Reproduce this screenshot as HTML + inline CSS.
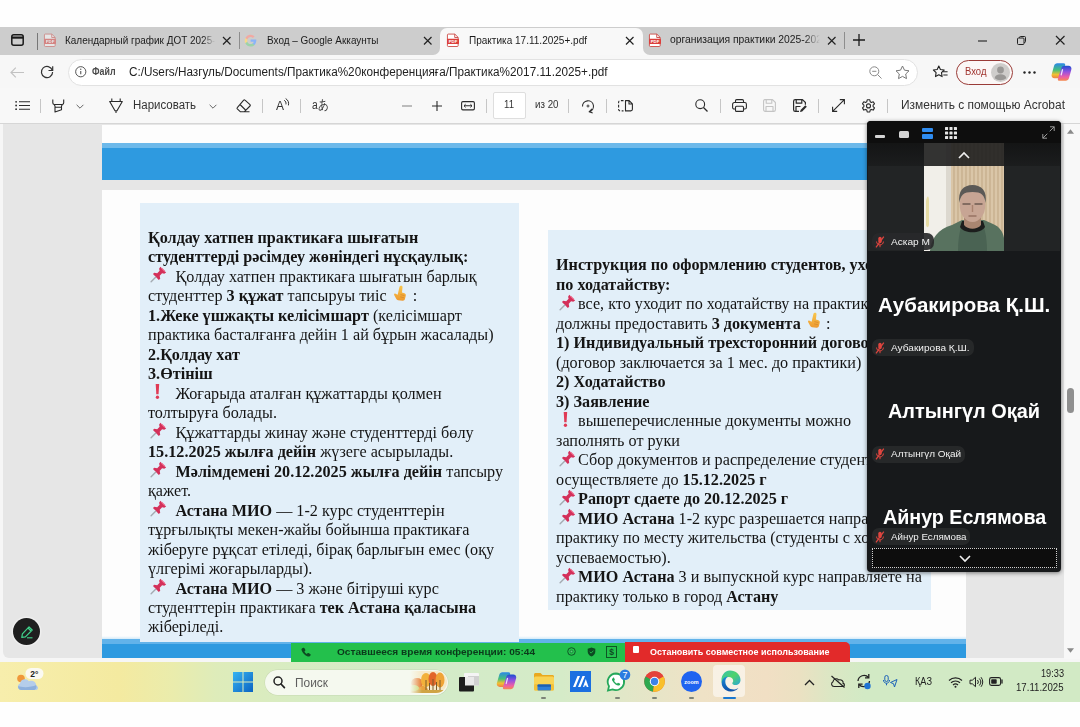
<!DOCTYPE html>
<html lang="ru"><head><meta charset="utf-8"><title>Практика 17.11.2025+.pdf</title>
<style>
*{box-sizing:border-box;margin:0;padding:0}
html,body{width:1080px;height:727px;overflow:hidden;background:#fefefe}
body{position:relative;font-family:"Liberation Sans",sans-serif;color:#1b1b1b}
.abs{position:absolute}
.t{position:absolute;white-space:pre;transform-origin:0 50%;display:block}
svg{position:absolute;overflow:visible}
.sep{position:absolute;width:1px;background:#c6c6c6}
#tabbar{left:0;top:26.500px;width:1080px;height:28px;background:#cdcdcd}
#acttab{left:440px;top:27.500px;width:203px;height:27px;background:#f8f8f8;border-radius:7px 7px 0 0}
#addr{left:0;top:54.500px;width:1080px;height:33.500px;background:#f7f7f7}
#pill{left:68px;top:58.500px;width:850px;height:27.500px;background:#fff;border:1px solid #e2e2e2;border-radius:14px}
#tool{left:0;top:88px;width:1080px;height:36px;background:#f8f8f8;border-bottom:1.200px solid #d6d6d6}
#viewer{left:0;top:122px;width:1080px;height:539px;background:#e6e6e6;overflow:hidden}
.ser{font-family:"Liberation Serif",serif;color:#141414}
#lbox{left:140px;top:203px;width:379px;height:438.700px;background:#e2eff9}
#rbox{left:548px;top:230px;width:383px;height:380px;background:#e2eff9}
.ln{height:19.45px;white-space:nowrap;position:relative}
.ln>span{display:inline-block;transform-origin:0 50%;white-space:pre}
.eb{position:relative;display:inline-block;height:1px;vertical-align:baseline}
.eb svg{position:absolute}
</style></head><body>

<div id="tabbar" class="abs"></div>
<div id="acttab" class="abs"></div>
<svg style="left:433px;top:47.500px;width:7px;height:7px" viewBox="0 0 7 7"><path d="M7 0v7H0A7 7 0 0 0 7 0z" fill="#f8f8f8"/></svg>
<svg style="left:643px;top:47.500px;width:7px;height:7px" viewBox="0 0 7 7"><path d="M0 0v7h7A7 7 0 0 1 0 0z" fill="#f8f8f8"/></svg>
<svg style="left:11px;top:33.8px;width:12px;height:12px;" viewBox="0 0 12 12"><rect x=".8" y=".8" width="11.4" height="10.4" rx="2" fill="none" stroke="#1a1a1a" stroke-width="1.5"/><path d="M.8 3.6h11.4" stroke="#1a1a1a" stroke-width="2.2"/></svg>
<div class="sep" style="left:37px;top:32.5px;height:17.5px;background:#777"></div>
<svg style="left:43.5px;top:32.75px;width:12px;height:14.5px;opacity:0.5" viewBox="0 0 14 16"><path d="M1.5 .8h7.6l3.9 3.9v9.6a1 1 0 0 1-1 1H1.5a1 1 0 0 1-1-1V1.8a1 1 0 0 1 1-1z" fill="#fff" stroke="#c9403c" stroke-width="1"/><path d="M9 .8v4h4" fill="none" stroke="#c9403c" stroke-width="1"/><rect x="0" y="6.2" width="14" height="6.2" rx=".8" fill="#dc3e3a"/><text x="7" y="11.2" font-family="Liberation Sans,sans-serif" font-size="5" font-weight="bold" fill="#fff" text-anchor="middle">PDF</text></svg>
<div class="abs" style="left:65px;top:30px;width:150px;height:20px;overflow:hidden;-webkit-mask-image:linear-gradient(90deg,#000 92%,transparent);mask-image:linear-gradient(90deg,#000 92%,transparent)"><span class="t" style="left:0px;top:3.61px;font-size:10.66px;line-height:12.79px;font-weight:normal;color:#1b1b1b;transform:scaleX(0.9347);">Календарный график ДОТ 2025-</span></div>
<svg style="left:222.75px;top:36.75px;width:7.5px;height:7.5px;" viewBox="0 0 7.5 7.5"><path d="M0 0L7.5 7.5M7.5 0L0 7.5" stroke="#222" stroke-width="1.2" fill="none"/></svg>
<div class="sep" style="left:239px;top:32px;height:17px;background:#8d8d8d"></div>
<svg style="left:244px;top:33.5px;width:13px;height:13px;" viewBox="0 0 13 13"><path d="M12.3 6.6c0-.4 0-.8-.1-1.2H6.6v2.3h3.2a2.8 2.8 0 0 1-1.2 1.8v1.5h1.9c1.1-1 1.8-2.6 1.8-4.4z" fill="#8ab4f8"/><path d="M6.6 12.5c1.6 0 3-.5 3.9-1.500l-1.900-1.500c-.5.400-1.200.600-2 .600-1.500 0-2.800-1-3.300-2.400H1.400v1.500a5.900 5.900 0 0 0 5.200 3.300z" fill="#9cd3a8"/><path d="M3.300 7.700a3.500 3.500 0 0 1 0-2.300V3.900H1.400a5.900 5.900 0 0 0 0 5.300z" fill="#f7d98a"/><path d="M6.600 3c.9 0 1.700.300 2.300.900l1.700-1.700A5.900 5.900 0 0 0 1.400 3.900l1.900 1.500C3.800 4 5.100 3 6.600 3z" fill="#f1a9a3"/></svg>
<span class="t" style="left:266.5px;top:33.62px;font-size:10.64px;line-height:12.77px;font-weight:normal;color:#1b1b1b;transform:scaleX(0.9357);">Вход – Google Аккаунты</span>
<svg style="left:424.25px;top:36.75px;width:7.5px;height:7.5px;" viewBox="0 0 7.5 7.5"><path d="M0 0L7.5 7.5M7.5 0L0 7.5" stroke="#222" stroke-width="1.2" fill="none"/></svg>
<svg style="left:447px;top:32.75px;width:12px;height:14.5px;opacity:1" viewBox="0 0 14 16"><path d="M1.5 .8h7.6l3.9 3.9v9.6a1 1 0 0 1-1 1H1.5a1 1 0 0 1-1-1V1.8a1 1 0 0 1 1-1z" fill="#fff" stroke="#c9403c" stroke-width="1"/><path d="M9 .8v4h4" fill="none" stroke="#c9403c" stroke-width="1"/><rect x="0" y="6.2" width="14" height="6.2" rx=".8" fill="#dc3e3a"/><text x="7" y="11.2" font-family="Liberation Sans,sans-serif" font-size="5" font-weight="bold" fill="#fff" text-anchor="middle">PDF</text></svg>
<span class="t" style="left:469px;top:33.57px;font-size:10.72px;line-height:12.86px;font-weight:normal;color:#1b1b1b;transform:scaleX(0.9351);">Практика 17.11.2025+.pdf</span>
<svg style="left:625.75px;top:36.75px;width:7.5px;height:7.5px;" viewBox="0 0 7.5 7.5"><path d="M0 0L7.5 7.5M7.5 0L0 7.5" stroke="#222" stroke-width="1.2" fill="none"/></svg>
<svg style="left:648.5px;top:32.75px;width:12px;height:14.5px;opacity:1" viewBox="0 0 14 16"><path d="M1.5 .8h7.6l3.9 3.9v9.6a1 1 0 0 1-1 1H1.5a1 1 0 0 1-1-1V1.8a1 1 0 0 1 1-1z" fill="#fff" stroke="#c9403c" stroke-width="1"/><path d="M9 .8v4h4" fill="none" stroke="#c9403c" stroke-width="1"/><rect x="0" y="6.2" width="14" height="6.2" rx=".8" fill="#dc3e3a"/><text x="7" y="11.2" font-family="Liberation Sans,sans-serif" font-size="5" font-weight="bold" fill="#fff" text-anchor="middle">PDF</text></svg>
<div class="abs" style="left:670px;top:30px;width:150px;height:20px;overflow:hidden;-webkit-mask-image:linear-gradient(90deg,#000 90%,transparent);mask-image:linear-gradient(90deg,#000 90%,transparent)"><span class="t" style="left:0px;top:3.4px;font-size:11px;line-height:13.2px;font-weight:normal;color:#1b1b1b;transform:scaleX(0.9395);">организация практики 2025-202</span></div>
<svg style="left:827.75px;top:36.75px;width:7.5px;height:7.5px;" viewBox="0 0 7.5 7.5"><path d="M0 0L7.5 7.5M7.5 0L0 7.5" stroke="#222" stroke-width="1.2" fill="none"/></svg>
<div class="sep" style="left:844px;top:32px;height:17px;background:#8d8d8d"></div>
<svg style="left:853px;top:34px;width:12px;height:12px;" viewBox="0 0 12 12"><path d="M6 0v12M0 6h12" stroke="#1a1a1a" stroke-width="1.3"/></svg>
<svg style="left:977.5px;top:40px;width:9px;height:2px;" viewBox="0 0 9 2"><path d="M0 1h9" stroke="#222" stroke-width="1.1"/></svg>
<svg style="left:1016.5px;top:36px;width:9px;height:9px;" viewBox="0 0 9 9"><rect x=".5" y="2" width="6.500" height="6.500" rx="1" fill="none" stroke="#222" stroke-width="1"/><path d="M2.500 2V1.500a1 1 0 0 1 1-1H7.500a1 1 0 0 1 1 1V5.500a1 1 0 0 1-1 1H7" fill="none" stroke="#222" stroke-width="1"/></svg>
<svg style="left:1055.75px;top:36.25px;width:8.5px;height:8.5px;" viewBox="0 0 8.5 8.5"><path d="M0 0L8.5 8.5M8.5 0L0 8.5" stroke="#222" stroke-width="1.2" fill="none"/></svg>
<div id="addr" class="abs"></div>
<svg style="left:9.5px;top:66.5px;width:14px;height:11px;" viewBox="0 0 14 11"><path d="M14 5.500H1M5.800 .7L1 5.500l4.800 4.800" stroke="#c2c2c2" stroke-width="1.2" fill="none"/></svg>
<svg style="left:40px;top:65px;width:14px;height:14px;" viewBox="0 0 14 14"><path d="M12.300 5.200A5.600 5.600 0 1 0 12.600 7" stroke="#333" stroke-width="1.200" fill="none"/><path d="M12.700 1.300v4.200H8.500" stroke="#333" stroke-width="1.200" fill="none"/></svg>
<div id="pill" class="abs"></div>
<svg style="left:74.75px;top:66.25px;width:11.5px;height:11.5px;" viewBox="0 0 11.5 11.5"><circle cx="5.750" cy="5.750" r="5.100" stroke="#555" stroke-width="1" fill="none"/><path d="M5.750 5v3.300" stroke="#555" stroke-width="1.100"/><circle cx="5.750" cy="3.300" r=".7" fill="#555"/></svg>
<span class="t" style="left:92px;top:65.88px;font-size:10.2px;line-height:12.24px;font-weight:bold;color:#4a4a4a;transform:scaleX(0.8669);">Файл</span>
<span class="t" style="left:128.5px;top:64.5px;font-size:12.5px;line-height:15px;font-weight:normal;color:#222;transform:scaleX(0.9397);">C:/Users/Назгуль/Documents/Практика%20конференцияға/Практика%2017.11.2025+.pdf</span>
<svg style="left:869px;top:66px;width:13px;height:13px;" viewBox="0 0 13 13"><circle cx="5.300" cy="5.300" r="4.500" stroke="#8a8a8a" stroke-width="1" fill="none"/><path d="M3.200 5.300h4.200M8.600 8.600l3.900 3.900" stroke="#8a8a8a" stroke-width="1" fill="none"/></svg>
<svg style="left:895px;top:64.75px;width:15px;height:14.5px;" viewBox="0 0 15 14.5"><path d="M7.500 1l2 4.200 4.500.600-3.300 3.200.8 4.600-4-2.200-4 2.200.8-4.600L1 5.800l4.500-.600z" stroke="#777" stroke-width="1" fill="none" stroke-linejoin="round"/></svg>
<svg style="left:932.5px;top:65.25px;width:15px;height:13.5px;" viewBox="0 0 15 13.5"><path d="M5.800 1l1.600 3.500 3.800.500-2.700 2.700.6 3.900-3.300-1.800-3.300 1.800.6-3.900L.4 5l3.800-.500z" stroke="#222" stroke-width="1.100" fill="none" stroke-linejoin="round"/><path d="M9.800 6.800h4.800M10.300 10h4.300" stroke="#222" stroke-width="1.100"/></svg>
<div class="abs" style="left:956px;top:59.5px;width:57px;height:25px;border:1.3px solid #9a3b37;border-radius:12.5px;background:#fbf7f6"></div>
<span class="t" style="left:964.5px;top:65.9px;font-size:10.17px;line-height:12.2px;font-weight:normal;color:#a2342f;transform:scaleX(0.9354);">Вход</span>
<svg style="left:990.5px;top:62.5px;width:19px;height:19px;" viewBox="0 0 19 19"><circle cx="9.500" cy="9.500" r="9.500" fill="#cfcdcb"/><circle cx="9.500" cy="7" r="3.400" fill="#9a9896"/><path d="M3.600 15.200c.4-2.600 2.600-3.900 5.900-3.900s5.500 1.300 5.900 3.900a9.400 9.400 0 0 1-11.800 0z" fill="#9a9896"/></svg>
<svg style="left:1023px;top:71px;width:13px;height:3px;" viewBox="0 0 13 3"><circle cx="1.500" cy="1.500" r="1.200" fill="#222"/><circle cx="6.500" cy="1.500" r="1.200" fill="#222"/><circle cx="11.500" cy="1.500" r="1.200" fill="#222"/></svg>
<svg style="left:1050.5px;top:62px;width:21px;height:20px;" viewBox="0 0 21 20"><defs><linearGradient id="caa" x1="0" y1="0" x2="0" y2="1"><stop offset="0" stop-color="#2a86ea"/><stop offset=".45" stop-color="#45c07a"/><stop offset=".75" stop-color="#f2c032"/><stop offset="1" stop-color="#f07f45"/></linearGradient><linearGradient id="cab" x1="0" y1="0" x2="0" y2="1"><stop offset="0" stop-color="#1c4fd0"/><stop offset=".4" stop-color="#9450e0"/><stop offset=".75" stop-color="#ee5fa6"/><stop offset="1" stop-color="#f58a4c"/></linearGradient></defs><path d="M6.300 1.200h6.200c1.300 0 2 .900 1.600 2.100L10.600 14c-.500 1.500-1.700 2.300-3.300 2.300H3.500C1.300 16.300 0 14.400.7 12.300L3 4C3.500 2.200 4.700 1.200 6.300 1.200z" fill="url(#caa)"/><path d="M14.700 18.800H8.500c-1.300 0-2-.900-1.600-2.100L10.400 6c.500-1.500 1.700-2.300 3.300-2.300h3.800c2.200 0 3.500 1.900 2.800 4L18 16c-.500 1.800-1.700 2.800-3.300 2.800z" fill="url(#cab)"/><path d="M10.900 7.500c.4-.800 1.300-.800 1.200.200l-1.300 5.200c-.3.900-1.300.900-1.200-.100z" fill="#fff" opacity=".85"/></svg>
<div id="tool" class="abs"></div>
<svg style="left:15px;top:100.8px;width:15px;height:9px;" viewBox="0 0 15 9"><path d="M4 .8h11M4 4.500h11M4 8.200h11" stroke="#2a2a2a" stroke-width="1.100"/><circle cx="1.100" cy=".8" r=".9" fill="#2a2a2a"/><circle cx="1.100" cy="4.500" r=".9" fill="#2a2a2a"/><circle cx="1.100" cy="8.200" r=".9" fill="#2a2a2a"/></svg>
<div class="sep" style="left:39.6px;top:98.5px;height:14.5px;background:#c6c6c6"></div>
<svg style="left:51.5px;top:98.5px;width:13px;height:14px;" viewBox="0 0 13 14"><path d="M.8 .6v3.200c0 .9.500 1.500 1.300 1.700l.9 1.500v6l6.500-2.300V7l.9-1.500c.8-.2 1.300-.8 1.300-1.700V.6M2.500 5.500h8M3 8.300h6.500" stroke="#2a2a2a" stroke-width="1.100" fill="none" stroke-linejoin="round"/></svg>
<svg style="left:76px;top:103.5px;width:8px;height:5px;" viewBox="0 0 8 5"><path d="M.6 .8L4 4.2 7.4 .8" stroke="#666" stroke-width="1" fill="none"/></svg>
<svg style="left:108.5px;top:97.5px;width:14px;height:16px;" viewBox="0 0 14 16"><path d="M2.800 .5v3M11.200 .5v3M.7 3.500h12.600L8 12.800H6zM7 12.800v2.200" stroke="#2a2a2a" stroke-width="1.100" fill="none" stroke-linejoin="round"/></svg>
<span class="t" style="left:133px;top:98.3px;font-size:12px;line-height:14.4px;font-weight:normal;color:#333;transform:scaleX(0.9555);">Нарисовать</span>
<svg style="left:209px;top:103.5px;width:8px;height:5px;" viewBox="0 0 8 5"><path d="M.6 .8L4 4.2 7.4 .8" stroke="#666" stroke-width="1" fill="none"/></svg>
<svg style="left:236px;top:98.5px;width:15px;height:14px;" viewBox="0 0 15 14"><path d="M9 1.200l5 4.500c.4.400.4.900 0 1.300l-5.800 5.800H4.500L1.300 9.900c-.4-.4-.4-.9 0-1.300L7.700 1.200c.4-.4.900-.4 1.300 0zM4 5.500l5.500 5.500M4.500 12.800h9" stroke="#2a2a2a" stroke-width="1.100" fill="none" stroke-linejoin="round"/></svg>
<div class="sep" style="left:261.6px;top:98.5px;height:14.5px;background:#c6c6c6"></div>
<span class="t" style="left:276px;top:98.2px;font-size:13px;line-height:15.6px;font-weight:normal;color:#333;transform:scaleX(0.9225);">A</span>
<svg style="left:284px;top:97.5px;width:6px;height:9px;" viewBox="0 0 6 9"><path d="M.5 2.500c1.200.800 1.800 2 1.500 3.500M2 .8C4.200 2.200 5 4.200 4.500 7" stroke="#333" stroke-width="1" fill="none" stroke-linecap="round"/></svg>
<div class="sep" style="left:299.6px;top:98.5px;height:14.5px;background:#c6c6c6"></div>
<span class="t" style="left:311.5px;top:98px;font-size:12.5px;line-height:15px;font-weight:normal;color:#333;transform:scaleX(0.8225);">aあ</span>
<svg style="left:402px;top:104.5px;width:10px;height:2px;" viewBox="0 0 10 2"><path d="M0 1h10" stroke="#8a8a8a" stroke-width="1.100"/></svg>
<svg style="left:431.5px;top:100.5px;width:10px;height:10px;" viewBox="0 0 10 10"><path d="M5 0v10M0 5h10" stroke="#2a2a2a" stroke-width="1.100"/></svg>
<svg style="left:461px;top:100.75px;width:14px;height:9.5px;" viewBox="0 0 14 9.5"><rect x=".6" y=".6" width="12.800" height="8.300" rx="1.300" stroke="#2a2a2a" stroke-width="1.100" fill="none"/><path d="M3 4.750h8M4.600 3.200L3 4.750l1.600 1.550M9.400 3.200L11 4.750 9.400 6.300" stroke="#2a2a2a" stroke-width="1" fill="none"/></svg>
<div class="sep" style="left:485.6px;top:98.5px;height:14.5px;background:#c6c6c6"></div>
<div class="abs" style="left:492.500px;top:92px;width:33.500px;height:27px;background:#fff;border:1px solid #dedede;border-radius:2px"></div>
<span class="t" style="left:504px;top:99.32px;font-size:10.3px;line-height:12.36px;font-weight:normal;color:#333;transform:scaleX(0.9343);">11</span>
<span class="t" style="left:534.5px;top:99.23px;font-size:10.44px;line-height:12.53px;font-weight:normal;color:#333;transform:scaleX(0.9347);">из 20</span>
<div class="sep" style="left:567.6px;top:98.5px;height:14.5px;background:#c6c6c6"></div>
<svg style="left:581px;top:98.5px;width:14px;height:14px;" viewBox="0 0 14 14"><path d="M1.500 7.500A5.500 5.500 0 1 1 8.500 12.600" stroke="#2a2a2a" stroke-width="1.100" fill="none"/><path d="M11 9.800l-2.700 2.900 3.400 1.200" stroke="#2a2a2a" stroke-width="1.100" fill="none"/><circle cx="7" cy="7" r="1" fill="none" stroke="#2a2a2a" stroke-width=".9"/></svg>
<div class="sep" style="left:605.6px;top:98.5px;height:14.5px;background:#c6c6c6"></div>
<svg style="left:618px;top:99.75px;width:15px;height:11.5px;" viewBox="0 0 15 11.5"><path d="M5.500 .6H2.200C1.300 .6.600 1.300.6 2.200v7.100c0 .9.700 1.600 1.600 1.600h3.300" stroke="#2a2a2a" stroke-width="1.100" fill="none" stroke-dasharray="2.600 1.600"/><path d="M7.500 .6h3.700l3.200 3.200v5.500c0 .9-.7 1.600-1.600 1.600H7.500zM11 .8v3.200h3.200" stroke="#2a2a2a" stroke-width="1.100" fill="none" stroke-linejoin="round"/></svg>
<svg style="left:694.5px;top:99px;width:13px;height:13px;" viewBox="0 0 13 13"><circle cx="5.200" cy="5.200" r="4.400" stroke="#2a2a2a" stroke-width="1.100" fill="none"/><path d="M8.500 8.500l4 4" stroke="#2a2a2a" stroke-width="1.200"/></svg>
<div class="sep" style="left:719.6px;top:98.5px;height:14.5px;background:#c6c6c6"></div>
<svg style="left:731.5px;top:99px;width:15px;height:13px;" viewBox="0 0 15 13"><path d="M3.500 3.500V1.800c0-.7.500-1.200 1.200-1.200h5.600c.7 0 1.200.500 1.200 1.200v1.700M3.500 10H2.200C1.300 10 .6 9.300.6 8.400V5.200c0-.9.700-1.700 1.600-1.700h10.600c.9 0 1.600.800 1.600 1.700v3.200c0 .9-.7 1.600-1.600 1.600h-1.300" stroke="#2a2a2a" stroke-width="1.100" fill="none"/><rect x="3.500" y="7.200" width="8" height="5.200" rx="1" stroke="#2a2a2a" stroke-width="1.100" fill="none"/></svg>
<svg style="left:763px;top:99px;width:13px;height:13px;" viewBox="0 0 13 13"><path d="M1.800 .6h7.700l2.900 2.900v7.200c0 .9-.7 1.700-1.600 1.700H2.200c-.9 0-1.600-.8-1.600-1.700V2.200C.6 1.300 1 .6 1.800 .6zM3.200 .8v3.400h5.600V.8M3 12.200V7.500h7v4.700" stroke="#c4c4c4" stroke-width="1.100" fill="none" stroke-linejoin="round"/></svg>
<svg style="left:793px;top:99px;width:14px;height:13px;" viewBox="0 0 14 13"><path d="M6 12.400H2.200c-.9 0-1.600-.8-1.600-1.700V2.200C.6 1.300 1.300.6 2.200.6h7.300l2.900 2.900v2.200M3.200.8v3.400h5.600V.8M3 12.200V7.500h4.500" stroke="#2a2a2a" stroke-width="1.200" fill="none" stroke-linejoin="round"/><path d="M12.300 6.300l1.500 1.500-4.600 4.600-2.200.6.600-2.100z" fill="#2a2a2a"/></svg>
<div class="sep" style="left:818.1px;top:98.5px;height:14.5px;background:#c6c6c6"></div>
<svg style="left:831.5px;top:99px;width:13px;height:13px;" viewBox="0 0 13 13"><path d="M7.800 .6h4.600v4.600M12.400 .6L.6 12.400M.6 7.800v4.600h4.600" stroke="#2a2a2a" stroke-width="1.100" fill="none"/></svg>
<svg style="left:860.5px;top:98.5px;width:15px;height:14px;" viewBox="0 0 15 14"><path d="M6.200.8h2.600l.4 1.900 1.200.7 1.800-.7 1.300 2.200-1.400 1.300v1.400l1.400 1.300-1.300 2.200-1.800-.7-1.200.7-.4 1.900H6.200l-.4-1.900-1.200-.7-1.800.7-1.300-2.200 1.400-1.300V6.200L1.500 4.900l1.300-2.200 1.800.7 1.200-.7z" stroke="#2a2a2a" stroke-width="1.100" fill="none" stroke-linejoin="round"/><circle cx="7.500" cy="6.900" r="2" stroke="#2a2a2a" stroke-width="1.100" fill="none"/></svg>
<div class="sep" style="left:886.6px;top:98.5px;height:14.5px;background:#c6c6c6"></div>
<span class="t" style="left:901px;top:98.3px;font-size:12px;line-height:14.4px;font-weight:normal;color:#333;transform:scaleX(0.9956);">Изменить с помощью Acrobat</span>
<div class="abs" style="left:0;top:124px;width:1080px;height:538px;background:#f6f6f6"></div>
<div class="abs" style="left:3px;top:124px;width:1077px;height:534px;background:#e6e6e6;border-radius:0 0 0 6px"></div>
<div class="abs" style="left:102px;top:125px;width:864px;height:55px;background:#fdfdfd"></div>
<div class="abs" style="left:102px;top:143px;width:864px;height:37px;background:#2e9ae0"></div>
<div class="abs" style="left:102px;top:143px;width:864px;height:5px;background:#6db9ea"></div>
<div class="abs" style="left:102px;top:190px;width:864px;height:468px;background:#fdfdfd"></div>
<div class="abs" style="left:102px;top:636px;width:864px;height:3px;background:linear-gradient(#fdfdfd,#d5ebf9)"></div>
<div class="abs" style="left:102px;top:639px;width:864px;height:5px;background:#62b3ea"></div>
<div class="abs" style="left:102px;top:643.600px;width:864px;height:14px;background:#2e9ae0"></div>
<div id="lbox" class="abs"></div>
<div id="rbox" class="abs"></div>
<div id="ltxt" class="abs ser" style="left:147.7px;top:227.8px;font-size:16.3px;line-height:19.49px"><div class="ln" style="height:19.49px"><span style="transform:scaleX(0.993)"><b>Қолдау хатпен практикаға шығатын</b></span></div><div class="ln" style="height:19.49px"><span style="transform:scaleX(0.993)"><b>студенттерді рәсімдеу жөніндегі нұсқаулық:</b></span></div><div class="ln" style="height:19.49px"><span style="transform:scaleX(0.993)"><span class="eb" style="width:23.7px"><svg viewBox="0 0 18 18" style="left:1.5px;top:-14.500px;width:17px;height:17px"><path d="M11 .8l6.200 6.200-2 1.200-2.300-.600-2.500 2.600.500 3.200-1.500 1.300L3.200 8.600l1.300-1.500 3.200.500 2.600-2.500-.600-2.300z" fill="#d4305a"/><path d="M12.300 2.200l3.500 3.500" stroke="#ee6a8c" stroke-width="1.300" fill="none"/><path d="M6 12L1.200 16.800" stroke="#a5abb2" stroke-width="1.500" stroke-linecap="round"/></svg></span> Қолдау хатпен практикаға шығатын барлық</span></div><div class="ln" style="height:19.49px"><span style="transform:scaleX(0.993)">студенттер <b>3 құжат</b> тапсыруы тиіс <span class="eb" style="width:18.2px"><svg viewBox="0 0 16 18" style="left:1.500px;top:-15.500px;width:15px;height:17px"><defs><linearGradient id="fg" x1="0" y1="0" x2="0" y2="1"><stop offset="0" stop-color="#f8c64e"/><stop offset="1" stop-color="#ee9a30"/></linearGradient></defs><path d="M9.300 .8c1-.2 1.800.5 1.700 1.500l-.6 5.600 2.700.9c1.100.4 1.700 1.400 1.400 2.500l-.9 3.600c-.3 1.100-1.300 1.800-2.400 1.700l-5-.5c-.9-.1-1.600-.6-2-1.400L2 10.500c-.4-.9.600-1.800 1.500-1.300l2.300 1.200L7.700 2c.2-.7.800-1.100 1.600-1.200z" fill="url(#fg)"/><path d="M8.800 10.200l4.300 1M8.500 12.600l4.100.9" stroke="#d6872a" stroke-width=".8"/></svg></span> :</span></div><div class="ln" style="height:19.49px"><span style="transform:scaleX(0.993)"><b>1.Жеке үшжақты келісімшарт</b> (келісімшарт</span></div><div class="ln" style="height:19.49px"><span style="transform:scaleX(0.993)">практика басталғанға дейін 1 ай бұрын жасалады)</span></div><div class="ln" style="height:19.49px"><span style="transform:scaleX(0.993)"><b>2.Қолдау хат</b></span></div><div class="ln" style="height:19.49px"><span style="transform:scaleX(0.993)"><b>3.Өтініш</b></span></div><div class="ln" style="height:19.49px"><span style="transform:scaleX(0.993)"><span class="eb" style="width:23.7px"><svg viewBox="0 0 8 18" style="left:6px;top:-14.500px;width:7px;height:17px"><path d="M2 .5h4l-.700 11.500H2.700z" fill="#e03a55"/><circle cx="4" cy="15.600" r="1.900" fill="#e03a55"/></svg></span> Жоғарыда аталған құжаттарды қолмен</span></div><div class="ln" style="height:19.49px"><span style="transform:scaleX(0.993)">толтыруға болады.</span></div><div class="ln" style="height:19.49px"><span style="transform:scaleX(0.993)"><span class="eb" style="width:23.7px"><svg viewBox="0 0 18 18" style="left:1.5px;top:-14.500px;width:17px;height:17px"><path d="M11 .8l6.200 6.200-2 1.200-2.300-.600-2.500 2.600.500 3.200-1.500 1.300L3.200 8.600l1.300-1.500 3.200.500 2.600-2.500-.600-2.300z" fill="#d4305a"/><path d="M12.300 2.200l3.500 3.500" stroke="#ee6a8c" stroke-width="1.300" fill="none"/><path d="M6 12L1.200 16.800" stroke="#a5abb2" stroke-width="1.500" stroke-linecap="round"/></svg></span> Құжаттарды жинау және студенттерді бөлу</span></div><div class="ln" style="height:19.49px"><span style="transform:scaleX(0.993)"><b>15.12.2025 жылға дейін</b> жүзеге асырылады.</span></div><div class="ln" style="height:19.49px"><span style="transform:scaleX(0.993)"><span class="eb" style="width:23.7px"><svg viewBox="0 0 18 18" style="left:1.5px;top:-14.500px;width:17px;height:17px"><path d="M11 .8l6.200 6.200-2 1.200-2.300-.600-2.500 2.600.500 3.200-1.500 1.300L3.200 8.600l1.300-1.500 3.200.500 2.600-2.500-.600-2.300z" fill="#d4305a"/><path d="M12.300 2.200l3.500 3.500" stroke="#ee6a8c" stroke-width="1.300" fill="none"/><path d="M6 12L1.200 16.800" stroke="#a5abb2" stroke-width="1.500" stroke-linecap="round"/></svg></span> <b>Мәлімдемені 20.12.2025 жылға дейін</b> тапсыру</span></div><div class="ln" style="height:19.49px"><span style="transform:scaleX(0.993)">қажет.</span></div><div class="ln" style="height:19.49px"><span style="transform:scaleX(0.993)"><span class="eb" style="width:23.7px"><svg viewBox="0 0 18 18" style="left:1.5px;top:-14.500px;width:17px;height:17px"><path d="M11 .8l6.200 6.200-2 1.200-2.300-.600-2.500 2.600.500 3.200-1.500 1.300L3.200 8.600l1.300-1.500 3.200.500 2.600-2.500-.600-2.300z" fill="#d4305a"/><path d="M12.300 2.200l3.500 3.500" stroke="#ee6a8c" stroke-width="1.300" fill="none"/><path d="M6 12L1.200 16.800" stroke="#a5abb2" stroke-width="1.500" stroke-linecap="round"/></svg></span> <b>Астана МИО</b> — 1-2 курс студенттерін</span></div><div class="ln" style="height:19.49px"><span style="transform:scaleX(0.993)">тұрғылықты мекен-жайы бойынша практикаға</span></div><div class="ln" style="height:19.49px"><span style="transform:scaleX(0.993)">жіберуге рұқсат етіледі, бірақ барлығын емес (оқу</span></div><div class="ln" style="height:19.49px"><span style="transform:scaleX(0.993)">үлгерімі жоғарыларды).</span></div><div class="ln" style="height:19.49px"><span style="transform:scaleX(0.993)"><span class="eb" style="width:23.7px"><svg viewBox="0 0 18 18" style="left:1.5px;top:-14.500px;width:17px;height:17px"><path d="M11 .8l6.200 6.200-2 1.200-2.300-.600-2.500 2.600.500 3.200-1.500 1.300L3.200 8.600l1.300-1.500 3.200.500 2.600-2.500-.600-2.300z" fill="#d4305a"/><path d="M12.300 2.200l3.500 3.500" stroke="#ee6a8c" stroke-width="1.300" fill="none"/><path d="M6 12L1.200 16.800" stroke="#a5abb2" stroke-width="1.500" stroke-linecap="round"/></svg></span> <b>Астана МИО</b> — 3 және бітіруші курс</span></div><div class="ln" style="height:19.49px"><span style="transform:scaleX(0.993)">студенттерін практикаға <b>тек Астана қаласына</b></span></div><div class="ln" style="height:19.49px"><span style="transform:scaleX(0.993)">жіберіледі.</span></div></div>
<div id="rtxt" class="abs ser" style="left:555.5px;top:255.4px;font-size:16.3px;line-height:19.49px"><div class="ln" style="height:19.49px"><span style="transform:scaleX(0.993)"><b>Инструкция по оформлению студентов, уходящих</b></span></div><div class="ln" style="height:19.49px"><span style="transform:scaleX(0.993)"><b>по ходатайству:</b></span></div><div class="ln" style="height:19.49px"><span style="transform:scaleX(0.993)"><span class="eb" style="width:22.2px"><svg viewBox="0 0 18 18" style="left:3.2px;top:-14.500px;width:17px;height:17px"><path d="M11 .8l6.200 6.200-2 1.200-2.300-.600-2.500 2.600.500 3.200-1.500 1.300L3.200 8.600l1.300-1.500 3.200.500 2.600-2.500-.600-2.300z" fill="#d4305a"/><path d="M12.300 2.200l3.500 3.500" stroke="#ee6a8c" stroke-width="1.300" fill="none"/><path d="M6 12L1.200 16.800" stroke="#a5abb2" stroke-width="1.500" stroke-linecap="round"/></svg></span>все, кто уходит по ходатайству на практику,</span></div><div class="ln" style="height:19.49px"><span style="transform:scaleX(0.993)">должны предоставить <b>3 документа</b> <span class="eb" style="width:17.2px"><svg viewBox="0 0 16 18" style="left:1.500px;top:-15.500px;width:15px;height:17px"><defs><linearGradient id="fg" x1="0" y1="0" x2="0" y2="1"><stop offset="0" stop-color="#f8c64e"/><stop offset="1" stop-color="#ee9a30"/></linearGradient></defs><path d="M9.300 .8c1-.2 1.800.5 1.700 1.500l-.6 5.600 2.700.9c1.100.4 1.700 1.400 1.400 2.500l-.9 3.600c-.3 1.100-1.300 1.800-2.400 1.700l-5-.5c-.9-.1-1.600-.6-2-1.400L2 10.500c-.4-.9.600-1.800 1.500-1.300l2.300 1.200L7.700 2c.2-.7.800-1.100 1.600-1.200z" fill="url(#fg)"/><path d="M8.800 10.200l4.300 1M8.500 12.600l4.100.9" stroke="#d6872a" stroke-width=".8"/></svg></span> :</span></div><div class="ln" style="height:19.49px"><span style="transform:scaleX(0.993)"><b>1) Индивидуальный трехсторонний договор</b></span></div><div class="ln" style="height:19.49px"><span style="transform:scaleX(0.993)">(договор заключается за 1 мес. до практики)</span></div><div class="ln" style="height:19.49px"><span style="transform:scaleX(0.993)"><b>2) Ходатайство</b></span></div><div class="ln" style="height:19.49px"><span style="transform:scaleX(0.993)"><b>3) Заявление</b></span></div><div class="ln" style="height:19.49px"><span style="transform:scaleX(0.993)"><span class="eb" style="width:22.2px"><svg viewBox="0 0 8 18" style="left:6px;top:-14.500px;width:7px;height:17px"><path d="M2 .5h4l-.700 11.500H2.700z" fill="#e03a55"/><circle cx="4" cy="15.600" r="1.900" fill="#e03a55"/></svg></span>вышеперечисленные документы можно</span></div><div class="ln" style="height:19.49px"><span style="transform:scaleX(0.993)">заполнять от руки</span></div><div class="ln" style="height:19.49px"><span style="transform:scaleX(0.993)"><span class="eb" style="width:22.2px"><svg viewBox="0 0 18 18" style="left:3.2px;top:-14.500px;width:17px;height:17px"><path d="M11 .8l6.200 6.200-2 1.200-2.300-.600-2.500 2.600.500 3.200-1.500 1.300L3.200 8.600l1.300-1.500 3.200.500 2.600-2.500-.600-2.300z" fill="#d4305a"/><path d="M12.300 2.200l3.500 3.500" stroke="#ee6a8c" stroke-width="1.300" fill="none"/><path d="M6 12L1.200 16.800" stroke="#a5abb2" stroke-width="1.500" stroke-linecap="round"/></svg></span>Сбор документов и распределение студентов</span></div><div class="ln" style="height:19.49px"><span style="transform:scaleX(0.993)">осуществляете до <b>15.12.2025 г</b></span></div><div class="ln" style="height:19.49px"><span style="transform:scaleX(0.993)"><span class="eb" style="width:22.2px"><svg viewBox="0 0 18 18" style="left:3.2px;top:-14.500px;width:17px;height:17px"><path d="M11 .8l6.200 6.200-2 1.200-2.300-.600-2.500 2.600.500 3.200-1.500 1.300L3.200 8.600l1.300-1.500 3.200.500 2.600-2.500-.600-2.300z" fill="#d4305a"/><path d="M12.300 2.200l3.500 3.500" stroke="#ee6a8c" stroke-width="1.300" fill="none"/><path d="M6 12L1.200 16.800" stroke="#a5abb2" stroke-width="1.500" stroke-linecap="round"/></svg></span><b>Рапорт сдаете до 20.12.2025 г</b></span></div><div class="ln" style="height:19.49px"><span style="transform:scaleX(0.993)"><span class="eb" style="width:22.2px"><svg viewBox="0 0 18 18" style="left:3.2px;top:-14.500px;width:17px;height:17px"><path d="M11 .8l6.200 6.200-2 1.200-2.300-.600-2.500 2.600.500 3.200-1.500 1.300L3.200 8.600l1.300-1.500 3.200.500 2.600-2.500-.600-2.300z" fill="#d4305a"/><path d="M12.300 2.200l3.500 3.500" stroke="#ee6a8c" stroke-width="1.300" fill="none"/><path d="M6 12L1.200 16.800" stroke="#a5abb2" stroke-width="1.500" stroke-linecap="round"/></svg></span><b>МИО Астана</b> 1-2 курс разрешается направлять на</span></div><div class="ln" style="height:19.49px"><span style="transform:scaleX(0.993)">практику по месту жительства (студенты с хорошей</span></div><div class="ln" style="height:19.49px"><span style="transform:scaleX(0.993)">успеваемостью).</span></div><div class="ln" style="height:19.49px"><span style="transform:scaleX(0.993)"><span class="eb" style="width:22.2px"><svg viewBox="0 0 18 18" style="left:3.2px;top:-14.500px;width:17px;height:17px"><path d="M11 .8l6.200 6.200-2 1.200-2.300-.600-2.500 2.600.500 3.200-1.500 1.300L3.200 8.600l1.300-1.500 3.200.500 2.600-2.500-.600-2.300z" fill="#d4305a"/><path d="M12.300 2.200l3.500 3.500" stroke="#ee6a8c" stroke-width="1.300" fill="none"/><path d="M6 12L1.200 16.800" stroke="#a5abb2" stroke-width="1.500" stroke-linecap="round"/></svg></span><b>МИО Астана</b> 3 и выпускной курс направляете на</span></div><div class="ln" style="height:19.49px"><span style="transform:scaleX(0.993)">практику только в город <b>Астану</b></span></div></div>
<div class="abs" style="left:1064px;top:124px;width:16px;height:534.500px;background:#f8f8f8"></div>
<svg style="left:1066.500px;top:128.500px;width:7px;height:5px" viewBox="0 0 9 6"><path d="M0 6L4.500 0 9 6z" fill="#8a8a8a"/></svg>
<svg style="left:1066.500px;top:648px;width:7px;height:5px" viewBox="0 0 9 6"><path d="M0 0L4.500 6 9 0z" fill="#8a8a8a"/></svg>
<div class="abs" style="left:1067px;top:388px;width:7px;height:25px;background:#8f8f8f;border-radius:3.500px"></div>
<div class="abs" style="left:13px;top:618px;width:27px;height:27px;background:#1f1f1f;border-radius:50%;box-shadow:0 0 0 1.500px rgba(255,255,255,.35)"></div>
<svg style="left:19.500px;top:624.500px;width:14px;height:14px" viewBox="0 0 14 14"><path d="M9 1.800l3.200 3.200-6.800 6.800-3.600.6.600-3.600zM8 3l3 3" stroke="#3fd18a" stroke-width="1.200" fill="none" stroke-linejoin="round"/><path d="M7 12.800h5.500" stroke="#3fd18a" stroke-width="1.100"/></svg>
<div class="abs" style="left:867px;top:121px;width:194px;height:451px;background:#17191b;border-radius:4px;box-shadow:0 1px 4px rgba(0,0,0,.5)"></div>
<div class="abs" style="left:867px;top:121px;width:194px;height:22px;background:#0e0e0e;border-radius:4px 4px 0 0"></div>
<div class="abs" style="left:875px;top:135px;width:10px;height:3px;background:#d4d4d4;border-radius:1px"></div>
<div class="abs" style="left:898.500px;top:131px;width:10.500px;height:7px;background:#d4d4d4;border-radius:1.500px"></div>
<div class="abs" style="left:922px;top:127.500px;width:10.500px;height:4.500px;background:#2f8cf0;border-radius:1px"></div>
<div class="abs" style="left:922px;top:134px;width:10.500px;height:4.500px;background:#2f8cf0;border-radius:1px"></div>
<svg style="left:945px;top:127px;width:12px;height:12px" viewBox="0 0 11.600 11.600"><rect x="0" y="0" width="3" height="3" rx=".6" fill="#e6e6e6"/><rect x="4.3" y="0" width="3" height="3" rx=".6" fill="#e6e6e6"/><rect x="8.6" y="0" width="3" height="3" rx=".6" fill="#e6e6e6"/><rect x="0" y="4.3" width="3" height="3" rx=".6" fill="#e6e6e6"/><rect x="4.3" y="4.3" width="3" height="3" rx=".6" fill="#e6e6e6"/><rect x="8.6" y="4.3" width="3" height="3" rx=".6" fill="#e6e6e6"/><rect x="0" y="8.6" width="3" height="3" rx=".6" fill="#e6e6e6"/><rect x="4.3" y="8.6" width="3" height="3" rx=".6" fill="#e6e6e6"/><rect x="8.6" y="8.6" width="3" height="3" rx=".6" fill="#e6e6e6"/></svg>
<svg style="left:1042px;top:126px;width:13px;height:13px" viewBox="0 0 13 13"><path d="M8 .8h4.200V5M12.200 .8L7.700 5.300M5 12.200H.8V8M.8 12.200l4.500-4.500" stroke="#9a9a9a" stroke-width="1" fill="none"/></svg>
<div class="abs" style="left:868px;top:143px;width:192px;height:108px;background:#222425"></div>
<div class="abs" style="left:868px;top:143px;width:192px;height:23px;background:linear-gradient(rgba(8,8,8,.55),rgba(8,8,8,.25))"></div>
<svg style="left:924px;top:143px;width:80px;height:108px" viewBox="0 0 80 108">
<rect width="80" height="108" fill="#e9e6df"/>
<rect x="0" y="0" width="22" height="108" fill="#f1efe9"/>
<rect x="22" y="0" width="5" height="108" fill="#dcd8cf"/>
<rect x="27" y="0" width="53" height="108" fill="#dac6a8"/>
<g stroke="#bfa683" stroke-width="1"><path d="M30 0v108"/><path d="M34 0v108"/><path d="M38 0v108"/><path d="M42 0v108"/><path d="M46 0v108"/><path d="M50 0v108"/><path d="M54 0v108"/><path d="M58 0v108"/><path d="M62 0v108"/><path d="M66 0v108"/><path d="M70 0v108"/><path d="M74 0v108"/><path d="M78 0v108"/></g>
<path d="M2 58c1-6 3-6 3 0v24c-1 3-2 3-3 0z" fill="#e6dca4"/>
<path d="M6 108c1-12 8-22 22-26l10-5h22l9 4c7 3 10 8 11 14v13z" fill="#58725f"/>
<path d="M34 108c0-9 1-19 4-27l21 1c3 7 4 17 4 26z" fill="#4a6353"/>
<path d="M36 84c4 7 21 7 25 0l-2-6H38z" fill="#1c1e1d"/>
<path d="M40 68h17v14c-4 5-13 5-17 0z" fill="#a98671"/>
<ellipse cx="48.500" cy="62" rx="12.800" ry="17" fill="#c7a594"/>
<path d="M35.500 60c-2-12 4-18 13-18s15 6 13 18c-1-8-4-11-13-11s-12 3-13 11z" fill="#5b5956"/>
<path d="M38.500 61h8M50.500 61h8" stroke="#6e5a50" stroke-width="1.400"/>
<path d="M48.500 62v7" stroke="#a8826e" stroke-width="1.400"/>
<path d="M44.500 73h8" stroke="#8a6758" stroke-width="1.200"/>
<rect width="80" height="23" fill="rgba(30,30,30,.9)"/>
</svg>
<svg style="left:958px;top:151.500px;width:12px;height:7px" viewBox="0 0 12 7"><path d="M1 6l5-5 5 5" stroke="#f0f0f0" stroke-width="1.600" fill="none"/></svg>
<div class="abs" style="left:871.5px;top:233px;width:62px;height:17px;background:rgba(40,41,42,.92);border-radius:7px"></div><svg style="left:875px;top:235.5px;width:10px;height:12px" viewBox="0 0 10 12"><rect x="3.300" y=".8" width="3.400" height="6.400" rx="1.700" fill="#e0453f"/><path d="M1.600 5.500c0 2.200 1.500 3.400 3.400 3.400s3.400-1.200 3.400-3.400M5 9v2.200" stroke="#e0453f" stroke-width="1" fill="none"/><path d="M8.800 .6L1 11.400" stroke="#e0453f" stroke-width="1.200"/></svg><span class="t" style="left:890.5px;top:235.88px;font-size:9.7px;line-height:11.64px;font-weight:normal;color:#f2f2f2;transform:scaleX(1.0457);">Аскар М</span>
<span class="t" style="left:878.3px;top:292.7px;font-size:20.5px;line-height:24.6px;font-weight:bold;color:#fff;transform:scaleX(1.0005);">Аубакирова Қ.Ш.</span>
<div class="abs" style="left:871.5px;top:339px;width:102px;height:17px;background:rgba(40,41,42,.92);border-radius:7px"></div><svg style="left:875px;top:341.5px;width:10px;height:12px" viewBox="0 0 10 12"><rect x="3.300" y=".8" width="3.400" height="6.400" rx="1.700" fill="#e0453f"/><path d="M1.600 5.500c0 2.200 1.500 3.400 3.400 3.400s3.400-1.200 3.400-3.400M5 9v2.200" stroke="#e0453f" stroke-width="1" fill="none"/><path d="M8.800 .6L1 11.400" stroke="#e0453f" stroke-width="1.200"/></svg><span class="t" style="left:890.5px;top:341.88px;font-size:9.7px;line-height:11.64px;font-weight:normal;color:#f2f2f2;transform:scaleX(1.0402);">Аубакирова Қ.Ш.</span>
<span class="t" style="left:888px;top:398.7px;font-size:20.5px;line-height:24.6px;font-weight:bold;color:#fff;transform:scaleX(0.9705);">Алтынгүл Оқай</span>
<div class="abs" style="left:871.5px;top:445.5px;width:93px;height:17px;background:rgba(40,41,42,.92);border-radius:7px"></div><svg style="left:875px;top:448px;width:10px;height:12px" viewBox="0 0 10 12"><rect x="3.300" y=".8" width="3.400" height="6.400" rx="1.700" fill="#e0453f"/><path d="M1.600 5.500c0 2.200 1.500 3.400 3.400 3.400s3.400-1.200 3.400-3.400M5 9v2.200" stroke="#e0453f" stroke-width="1" fill="none"/><path d="M8.800 .6L1 11.400" stroke="#e0453f" stroke-width="1.200"/></svg><span class="t" style="left:890.5px;top:448.38px;font-size:9.7px;line-height:11.64px;font-weight:normal;color:#f2f2f2;transform:scaleX(1.0268);">Алтынгүл Оқай</span>
<span class="t" style="left:882.7px;top:504.7px;font-size:20.5px;line-height:24.6px;font-weight:bold;color:#fff;transform:scaleX(0.9586);">Айнур Еслямова</span>
<div class="abs" style="left:871.5px;top:528px;width:98px;height:17px;background:rgba(40,41,42,.92);border-radius:7px"></div><svg style="left:875px;top:530.5px;width:10px;height:12px" viewBox="0 0 10 12"><rect x="3.300" y=".8" width="3.400" height="6.400" rx="1.700" fill="#e0453f"/><path d="M1.600 5.500c0 2.200 1.500 3.400 3.400 3.400s3.400-1.200 3.400-3.400M5 9v2.200" stroke="#e0453f" stroke-width="1" fill="none"/><path d="M8.800 .6L1 11.400" stroke="#e0453f" stroke-width="1.200"/></svg><span class="t" style="left:890.5px;top:530.88px;font-size:9.7px;line-height:11.64px;font-weight:normal;color:#f2f2f2;transform:scaleX(1.0119);">Айнур Еслямова</span>
<div class="abs" style="left:872px;top:548px;width:185px;height:20px;background:#0d0d0d;border:1px dotted #cfcfcf"></div>
<svg style="left:958.500px;top:554.500px;width:12px;height:7px" viewBox="0 0 12 7"><path d="M1 1l5 5 5-5" stroke="#f0f0f0" stroke-width="1.600" fill="none"/></svg>
<div class="abs" style="left:290.500px;top:643px;width:335px;height:18.500px;background:#23c04c"></div>
<div class="abs" style="left:625px;top:642px;width:225px;height:19.500px;background:#e22a2a;border-radius:0 5px 0 0"></div>
<svg style="left:301px;top:647px;width:10px;height:10px" viewBox="0 0 10 10"><path d="M2.200 .8c.5-.3 1 0 1.300.500l.8 1.500c.2.500.1 1-.3 1.300l-.6.500c.5 1.100 1.300 1.900 2.400 2.400l.5-.6c.3-.4.800-.5 1.300-.3l1.500.8c.5.300.8.800.5 1.300C9 9.400 8 9.800 6.800 9.400 3.800 8.400 1.600 6.200.6 3.200.2 2 .9 1.300 2.200.8z" fill="#0d4a22"/></svg>
<span class="t" style="left:337px;top:645.92px;font-size:9.8px;line-height:11.76px;font-weight:bold;color:#0b3a1b;transform:scaleX(1.0302);">Оставшееся время конференции: 05:44</span>
<svg style="left:566.5px;top:647px;width:9px;height:9px" viewBox="0 0 9 9"><circle cx="4.500" cy="4.500" r="3.800" stroke="#0d4a22" stroke-width=".9" fill="none"/><circle cx="4.500" cy="4.500" r="1.300" fill="#58d57a" stroke="#0d4a22" stroke-width=".5"/></svg>
<svg style="left:586.5px;top:647px;width:9px;height:10px" viewBox="0 0 9 10"><path d="M4.500 .5l3.800 1.300v3c0 2.200-1.500 3.800-3.800 4.700C2.200 8.600.7 7 .7 4.800v-3z" fill="#0d4a22"/><path d="M2.800 4.800l1.300 1.300 2.300-2.400" stroke="#23c04c" stroke-width=".9" fill="none"/></svg>
<svg style="left:605.5px;top:646px;width:11px;height:12px" viewBox="0 0 11 12"><rect x=".5" y=".5" width="10" height="11" fill="none" stroke="#0d4a22" stroke-width=".9"/><text x="5.500" y="9.300" font-family="Liberation Sans,sans-serif" font-size="8.500" font-weight="bold" fill="#0d4a22" text-anchor="middle">$</text></svg>
<div class="abs" style="left:632.500px;top:646px;width:6.500px;height:6.500px;background:#fff;border-radius:1px"></div>
<span class="t" style="left:650px;top:645.92px;font-size:9.8px;line-height:11.76px;font-weight:bold;color:#fff;transform:scaleX(0.9171);">Остановить совместное использование</span>
<div class="abs" style="left:0;top:661.500px;width:1080px;height:40.500px;background:linear-gradient(90deg,#f7eeac 0,#f4eaa0 11%,#eaecac 16%,#deecba 20%,#d7ecc3 28%,#d3ebc8 40%,#d5ebc8 52%,#e2e7c8 58%,#efe2c6 65%,#f1dfc4 71%,#ebe1c2 74%,#dbe7c4 77%,#d2eac5 80%,#d2eac5 100%)"></div>
<div class="abs" style="left:0;top:702px;width:1080px;height:25px;background:#fefefe"></div>
<svg style="left:16px;top:668px;width:30px;height:24px" viewBox="0 0 30 24"><circle cx="5" cy="10.500" r="3.800" fill="#f0983a"/><path d="M5.500 22c-4 0-5-5-1.500-6.500.5-4.500 6.500-5.800 8.800-2.300 4-1.500 7.800 1 7.300 4.500 2.800.500 2.700 4.300-.6 4.300z" fill="#b4cdea"/><path d="M5.500 22c-2.500 0-3.800-2-3.300-4 3.500 1.800 13.500 1.500 18-1 .8 2.500-.2 5-2.700 5z" fill="#8db0dc"/><rect x="9.500" y="0" width="18" height="11" rx="5.500" fill="#fbfaf2"/><text x="18.300" y="8.800" font-family="Liberation Sans,sans-serif" font-size="8.500" font-weight="bold" fill="#222" text-anchor="middle">2°</text></svg>
<svg style="left:232.5px;top:671.5px;width:20px;height:20px" viewBox="0 0 20 20"><defs><linearGradient id="wl" x1="0" y1="0" x2="1" y2="1"><stop offset="0" stop-color="#36b4f2"/><stop offset="1" stop-color="#0b63c2"/></linearGradient></defs><path d="M0 0h9.500v9.500H0zM10.500 0H20v9.500h-9.500zM0 10.500h9.500V20H0zM10.500 10.500H20V20h-9.500z" fill="url(#wl)"/></svg>
<div class="abs" style="left:264.500px;top:670px;width:183px;height:24.500px;background:#f5f9ef;border-radius:12.500px;box-shadow:0 0 0 .5px rgba(0,0,0,.08)"></div>
<svg style="left:272.5px;top:676px;width:12px;height:12.5px" viewBox="0 0 12 12.5"><circle cx="5" cy="5" r="4" stroke="#222" stroke-width="1.500" fill="none"/><path d="M8 8l3.400 3.600" stroke="#222" stroke-width="1.700" stroke-linecap="round"/></svg>
<span class="t" style="left:295px;top:674.65px;font-size:12.74px;line-height:15.29px;font-weight:normal;color:#5e5e5e;transform:scaleX(0.9349);">Поиск</span>
<svg style="left:409.5px;top:671px;width:37px;height:22px" viewBox="0 0 37 22"><defs><linearGradient id="afd" x1="0" y1="0" x2="1" y2="0"><stop offset="0" stop-color="#f5f9ef"/><stop offset="1" stop-color="#f5f9ef" stop-opacity="0"/></linearGradient><clipPath id="ac"><path d="M0 0h26a11 11 0 0 1 0 22H0z"/></clipPath></defs><g clip-path="url(#ac)"><rect width="37" height="22" fill="#f6e9c8"/><ellipse cx="8" cy="19" rx="10" ry="5" fill="#e9a23c"/><ellipse cx="7" cy="12" rx="6" ry="5" fill="#e67a2e"/><ellipse cx="16" cy="9" rx="5" ry="7" fill="#f2b13a"/><ellipse cx="23" cy="8" rx="4.500" ry="7" fill="#e2662a"/><ellipse cx="30" cy="9" rx="4.500" ry="7.500" fill="#efa437"/><path d="M16 9v12M23 8v13M30 9v12M19.500 12v9M26.500 11v10" stroke="#7a5a2a" stroke-width="1"/><rect y="19" width="37" height="3" fill="#cfa444"/><ellipse cx="4" cy="17" rx="5" ry="3" fill="#c9d36a"/><rect width="12" height="22" fill="url(#afd)"/></g></svg>
<svg style="left:458.5px;top:673px;width:20px;height:18.5px" viewBox="0 0 20 18.5"><rect x="5" y="0" width="15" height="12.500" rx="1" fill="#f4f4f4"/><rect x="9" y="3" width="11" height="9.500" fill="#d0d0d0"/><rect x="0" y="4" width="15" height="14.500" rx="1" fill="#1d1d1d"/><rect x="6" y="4" width="9" height="8.500" fill="#e9e9e9"/></svg>
<svg style="left:496px;top:671px;width:21px;height:19.5px" viewBox="0 0 21 20"><defs><linearGradient id="cba" x1="0" y1="0" x2="0" y2="1"><stop offset="0" stop-color="#2a86ea"/><stop offset=".45" stop-color="#45c07a"/><stop offset=".75" stop-color="#f2c032"/><stop offset="1" stop-color="#f07f45"/></linearGradient><linearGradient id="cbb" x1="0" y1="0" x2="0" y2="1"><stop offset="0" stop-color="#1c4fd0"/><stop offset=".4" stop-color="#9450e0"/><stop offset=".75" stop-color="#ee5fa6"/><stop offset="1" stop-color="#f58a4c"/></linearGradient></defs><path d="M6.300 1.200h6.200c1.300 0 2 .900 1.600 2.100L10.600 14c-.500 1.500-1.700 2.300-3.300 2.300H3.500C1.300 16.300 0 14.400.7 12.300L3 4C3.500 2.200 4.700 1.200 6.300 1.200z" fill="url(#cba)"/><path d="M14.700 18.800H8.500c-1.300 0-2-.900-1.600-2.100L10.400 6c.500-1.500 1.700-2.300 3.300-2.300h3.800c2.200 0 3.500 1.900 2.800 4L18 16c-.500 1.800-1.700 2.800-3.300 2.800z" fill="url(#cbb)"/><path d="M10.900 7.500c.4-.800 1.300-.800 1.200.200l-1.300 5.200c-.3.900-1.300.900-1.200-.100z" fill="#fff" opacity=".85"/></svg>
<svg style="left:532.5px;top:672px;width:22px;height:19px" viewBox="0 0 22 19"><path d="M1 2.500C1 1.700 1.700 1 2.500 1h5l2 2h10c.8 0 1.500.7 1.500 1.500V7H1z" fill="#e9a920"/><rect x="1" y="4.500" width="20" height="14" rx="1.500" fill="#f9d354"/><rect x="1" y="12" width="20" height="6.500" rx="1.500" fill="#f3c13a"/><rect x="4.500" y="12.500" width="13.500" height="6" rx="1" fill="#2f7fd6"/><rect x="4.500" y="12.500" width="13.500" height="2.200" rx="1" fill="#1c5fb0"/></svg>
<div class="abs" style="left:570px;top:671px;width:21px;height:21px;background:#1b6fe0"></div>
<svg style="left:570px;top:671px;width:21px;height:21px" viewBox="0 0 21 21"><path d="M3 16L7.500 5h2.500L5.500 16zM8 16L12.500 5H15L10.500 16z" fill="#fff"/><path d="M13 16l2.800-8 2.700 8h-1.800l-.4-1.500h-1.600L14.300 16z" fill="#fff"/></svg>
<svg style="left:605px;top:670px;width:26px;height:24px" viewBox="0 0 26 24"><path d="M11 3.500a8.300 8.300 0 0 0-7 12.700L3 20.500l4.500-1.100A8.300 8.300 0 1 0 11 3.500z" fill="#fff" stroke="#25a85a" stroke-width="1.800"/><path d="M8 8c.3-.6.800-.6 1.100 0l.7 1.400c.1.300 0 .6-.2.800l-.5.600c.7 1.300 1.600 2.200 2.900 2.900l.6-.6c.2-.2.500-.3.800-.2l1.400.7c.6.300.6.800 0 1.300-1 .9-2.500.7-4.300-.5-1.500-1-2.600-2.300-3.300-3.800C6.700 9.400 7.200 8.500 8 8z" fill="#25a85a"/><circle cx="20" cy="4.800" r="5.300" fill="#2c7be0"/><text x="20" y="8" font-family="Liberation Sans,sans-serif" font-size="9" fill="#fff" text-anchor="middle">7</text></svg>
<svg style="left:643.5px;top:670.5px;width:21px;height:21px" viewBox="0 0 21 21"><circle cx="10.500" cy="10.500" r="10.300" fill="#e4433a"/><path d="M10.500 10.500L1.600 5.400A10.300 10.300 0 0 0 9 20.700z" fill="#2da94f"/><path d="M10.500 10.500L9 20.700A10.300 10.300 0 0 0 19.500 5.500z" fill="#f9c02a"/><path d="M1.600 5.400A10.300 10.300 0 0 1 19.500 5.500H10.500z" fill="#e4433a"/><circle cx="10.500" cy="10.500" r="4.700" fill="#fff"/><circle cx="10.500" cy="10.500" r="3.700" fill="#3c83e8"/></svg>
<svg style="left:681px;top:670.5px;width:21px;height:21px" viewBox="0 0 21 21"><circle cx="10.500" cy="10.500" r="10.500" fill="#1e63f0"/><text x="10.500" y="12.500" font-family="Liberation Sans,sans-serif" font-size="5.500" font-weight="bold" fill="#fff" text-anchor="middle">zoom</text></svg>
<div class="abs" style="left:713px;top:665px;width:32px;height:32px;background:rgba(255,255,255,.55);border-radius:4px"></div>
<svg style="left:718.5px;top:670px;width:22px;height:22px" viewBox="0 0 22 22"><defs><linearGradient id="eg1" x1="0" y1="0" x2="1" y2="1"><stop offset="0" stop-color="#35c1b0"/><stop offset=".5" stop-color="#4fd36a"/><stop offset="1" stop-color="#2aa6d8"/></linearGradient><linearGradient id="eg2" x1="0" y1="0" x2="0" y2="1"><stop offset="0" stop-color="#1a8fd8"/><stop offset="1" stop-color="#0d4fa8"/></linearGradient></defs><path d="M11 .5c5.800 0 10.500 4.200 10.500 9.500 0 3-2.200 5-5 5-2 0-3.200-.8-3.200-1.800 0-.8.900-1 .9-2.500 0-2.200-2-3.700-4.500-3.700-3.800 0-6.500 3-6.800 6.500C1 6.500 5.200.5 11 .5z" fill="url(#eg1)"/><path d="M2.700 12.500c.3-3.500 3-6 6.300-6-1.800 1-2.700 3-2.700 5 0 4.500 3.800 8 8.400 8 1.800 0 3.500-.6 4.800-1.500-2 2.500-5 3.800-8.300 3.500-5-.5-8.800-4.400-8.500-9z" fill="url(#eg2)"/></svg>
<div class="abs" style="left:723px;top:696.500px;width:13px;height:2.500px;background:#1a78d0;border-radius:1.200px"></div>
<div class="abs" style="left:541px;top:697px;width:5px;height:2px;background:#7d8378;border-radius:1px"></div>
<div class="abs" style="left:615px;top:697px;width:5px;height:2px;background:#7d8378;border-radius:1px"></div>
<div class="abs" style="left:651.5px;top:697px;width:5px;height:2px;background:#7d8378;border-radius:1px"></div>
<div class="abs" style="left:689px;top:697px;width:5px;height:2px;background:#7d8378;border-radius:1px"></div>
<svg style="left:804px;top:678.5px;width:11px;height:7px" viewBox="0 0 11 7"><path d="M1 6l4.500-4.500L10 6" stroke="#222" stroke-width="1.300" fill="none"/></svg>
<svg style="left:829.5px;top:674.5px;width:16px;height:13px" viewBox="0 0 16 13"><path d="M4 11.500c-2.500 0-3.500-3.500-1-4.800.2-2.800 3.800-4 5.600-1.800 2.800-.8 5 1.200 4.500 3.500 2 .5 1.800 3.100-.6 3.100z" stroke="#222" stroke-width="1.100" fill="none"/><path d="M1.500 1l13 11.500" stroke="#222" stroke-width="1.200"/></svg>
<svg style="left:856px;top:673px;width:16px;height:17px" viewBox="0 0 16 17"><path d="M2 8a6 6 0 0 1 10.500-3.500M13.500 8A6 6 0 0 1 3 11.500" stroke="#222" stroke-width="1.300" fill="none"/><path d="M12.800 1v3.800H9M2.800 15v-3.800h3.800" stroke="#222" stroke-width="1.300" fill="none"/><circle cx="11.500" cy="13" r="3.200" fill="#1f74d4"/></svg>
<svg style="left:883px;top:674.5px;width:15px;height:14px" viewBox="0 0 15 14"><rect x="1.800" y=".5" width="3.400" height="6" rx="1.700" stroke="#1b62b8" stroke-width="1" fill="none"/><path d="M.5 5c0 2 1.300 3.200 3 3.200S6.500 7 6.500 5M3.500 8.300v2" stroke="#1b62b8" stroke-width="1" fill="none"/><path d="M14 4.500L7.500 7.500l3 1.200 1 3.300z" stroke="#1b62b8" stroke-width="1" fill="none" stroke-linejoin="round"/></svg>
<span class="t" style="left:914.5px;top:676px;font-size:10px;line-height:12px;font-weight:normal;color:#222;transform:scaleX(0.9220);">ҚАЗ</span>
<svg style="left:947.5px;top:675.5px;width:15px;height:12px" viewBox="0 0 15 12"><path d="M1 4.500a9.500 9.500 0 0 1 13 0M3 6.800a6.500 6.500 0 0 1 9 0M5 9a3.600 3.600 0 0 1 5 0" stroke="#222" stroke-width="1.200" fill="none"/><circle cx="7.500" cy="10.800" r="1" fill="#222"/></svg>
<svg style="left:968.5px;top:675.5px;width:14px;height:12px" viewBox="0 0 14 12"><path d="M1 4.200h2.300L6.500 1.300v9.400L3.300 7.800H1z" stroke="#222" stroke-width="1" fill="none" stroke-linejoin="round"/><path d="M8.500 4a3 3 0 0 1 0 4M10.300 2.500a5.300 5.300 0 0 1 0 7M12 1.200a7.500 7.500 0 0 1 0 9.600" stroke="#222" stroke-width="1" fill="none"/></svg>
<svg style="left:988.5px;top:677px;width:14px;height:9px" viewBox="0 0 14 9"><rect x=".6" y=".6" width="11" height="7.800" rx="1.800" stroke="#222" stroke-width="1.100" fill="none"/><rect x="2.200" y="2.200" width="5.500" height="4.600" rx=".8" fill="#222"/><path d="M13 3v3" stroke="#222" stroke-width="1.300" stroke-linecap="round"/></svg>
<span class="t" style="left:1040.5px;top:667.76px;font-size:10.4px;line-height:12.48px;font-weight:normal;color:#222;transform:scaleX(0.8841);">19:33</span>
<span class="t" style="left:1016px;top:681.56px;font-size:10.4px;line-height:12.48px;font-weight:normal;color:#222;transform:scaleX(0.9271);">17.11.2025</span>
</body></html>
